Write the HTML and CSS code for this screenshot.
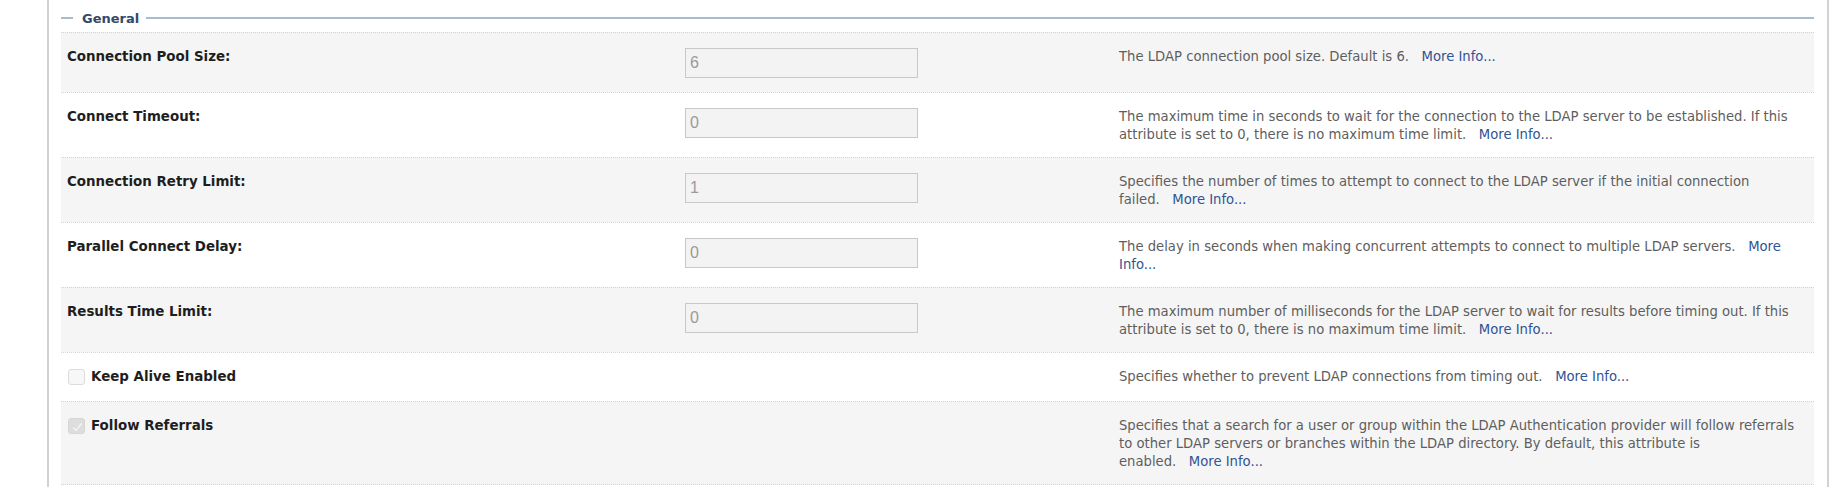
FILE: index.html
```html
<!DOCTYPE html>
<html lang="en">
<head>
    <meta charset="UTF-8">
    <title>LDAP Authentication Provider - General</title>
    <link rel="stylesheet" href="styles.css">
</head>
<body>
    <div class="page">
        <div class="group-title"><span>General</span></div>

        <div class="row odd">
            <div class="label">Connection Pool Size:</div>
            <div class="field"><input type="text" value="6" disabled></div>
            <div class="desc">The LDAP connection pool size. Default is 6.&nbsp;&nbsp;&nbsp;<a href="#">More Info...</a></div>
        </div>

        <div class="row">
            <div class="label">Connect Timeout:</div>
            <div class="field"><input type="text" value="0" disabled></div>
            <div class="desc">The maximum time in seconds to wait for the connection to the LDAP server to be established. If this attribute is set to 0, there is no maximum time limit.&nbsp;&nbsp;&nbsp;<a href="#">More Info...</a></div>
        </div>

        <div class="row odd">
            <div class="label">Connection Retry Limit:</div>
            <div class="field"><input type="text" value="1" disabled></div>
            <div class="desc">Specifies the number of times to attempt to connect to the LDAP server if the initial connection failed.&nbsp;&nbsp;&nbsp;<a href="#">More Info...</a></div>
        </div>

        <div class="row">
            <div class="label">Parallel Connect Delay:</div>
            <div class="field"><input type="text" value="0" disabled></div>
            <div class="desc">The delay in seconds when making concurrent attempts to connect to multiple LDAP servers.&nbsp;&nbsp;&nbsp;<a href="#">More Info...</a></div>
        </div>

        <div class="row odd">
            <div class="label">Results Time Limit:</div>
            <div class="field"><input type="text" value="0" disabled></div>
            <div class="desc">The maximum number of milliseconds for the LDAP server to wait for results before timing out. If this attribute is set to 0, there is no maximum time limit.&nbsp;&nbsp;&nbsp;<a href="#">More Info...</a></div>
        </div>

        <div class="row single">
            <div class="label check-label"><span class="checkbox"></span>Keep Alive Enabled</div>
            <div class="field"></div>
            <div class="desc">Specifies whether to prevent LDAP connections from timing out.&nbsp;&nbsp;&nbsp;<a href="#">More Info...</a></div>
        </div>

        <div class="row odd last">
            <div class="label check-label"><span class="checkbox checked"><svg width="16" height="16" viewBox="0 0 16 16"><path d="M4 8.5 L7 11.5 L12.5 4.5" fill="none" stroke="#f4f4f4" stroke-width="1.4"/></svg></span>Follow Referrals</div>
            <div class="field"></div>
            <div class="desc">Specifies that a search for a user or group within the LDAP Authentication provider will follow referrals to other LDAP servers or branches within the LDAP directory. By default, this attribute is enabled.&nbsp;&nbsp;&nbsp;<a href="#">More Info...</a></div>
        </div>
    </div>
</body>
</html>
```

FILE: styles.css
```css
body {
    margin: 0;
    background: #fff;
    font-family: 'DejaVu Sans', Verdana, sans-serif;
}
.page {
    margin-left: 47px;
    width: 1782px;
    min-height: 100vh;
    border-left: 2px solid #d2d2d2;
    border-right: 2px solid #d2d2d2;
    padding: 10px 13px 0 12px;
    box-sizing: border-box;
}
.group-title {
    display: flex;
    align-items: center;
    height: 16px;
    margin-bottom: 6px;
    font-size: 13px;
    font-weight: bold;
    color: #34496a;
}
.group-title:before,
.group-title:after {
    content: "";
    height: 2px;
    background: #a9bbd0;
}
.group-title:before {
    width: 12px;
}
.group-title:after {
    flex: 1;
}
.group-title span {
    padding: 0 7px 0 9px;
}
.row {
    display: grid;
    grid-template-columns: 618px 434px 1fr;
    padding: 15px 18px 13px 6px;
    border-top: 1px dotted #d3d3d3;
    line-height: 18px;
}
.row.odd {
    background: #f5f5f5;
}
.row.single {
    padding-bottom: 15px;
}
.row.last {
    border-bottom: 1px dotted #d3d3d3;
}
.label {
    font-size: 13.4px;
    font-weight: bold;
    color: #1e1e1e;
}
.field input {
    display: block;
    width: 233px;
    height: 30px;
    box-sizing: border-box;
    margin: 0 0 1px;
    padding: 0 4px;
    border: 1px solid #c8c8c8;
    background: #f3f3f3;
    font-family: 'Liberation Sans', Arial, sans-serif;
    font-size: 16px;
    color: #9a9a9a;
}
.desc {
    font-size: 13.2px;
    color: #5e5e5e;
}
.desc a {
    color: #2f5394;
    text-decoration: none;
}
.check-label {
    display: flex;
    align-items: center;
    align-self: start;
    height: 18px;
}
.checkbox {
    display: inline-block;
    width: 17px;
    height: 16px;
    box-sizing: border-box;
    margin: 0 6px 0 1px;
    border: 1px solid #dcdcdc;
    border-radius: 3px;
    background: #f7f7f7;
}
.checkbox.checked {
    background: #dddddd;
    border-color: #d6d6d6;
}
.checkbox svg {
    display: block;
}
```
